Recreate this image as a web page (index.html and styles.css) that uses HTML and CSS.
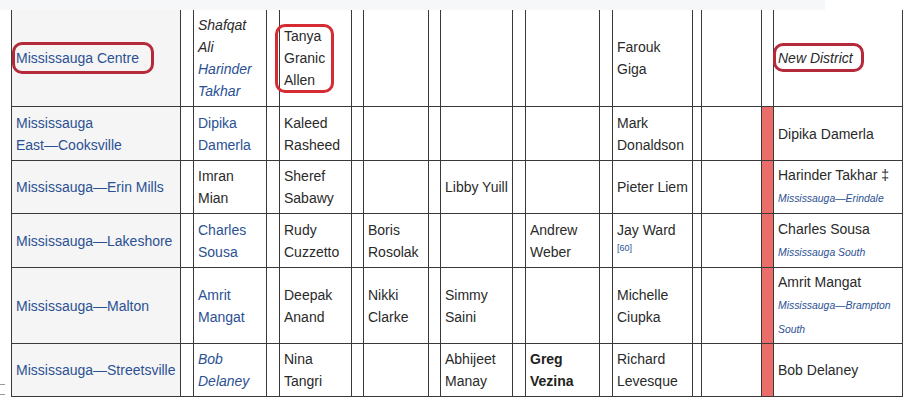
FILE: index.html
```html
<!DOCTYPE html>
<html lang="en">
<head>
<meta charset="utf-8">
<title>Mississauga ridings</title>
<link rel="stylesheet" href="styles.css">
</head>
<body>
<div class="band"></div>
<div class="wrap">
  <table class="results">
    <colgroup>
      <col class="w-dist"><col class="w-13"><col class="w-lib"><col class="w-13">
      <col class="w-pc"><col class="w-12"><col class="w-ndp"><col class="w-12">
      <col class="w-grn"><col class="w-13"><col class="w-oth"><col class="w-13">
      <col class="w-ind"><col class="w-9"><col class="w-blank"><col class="w-12">
      <col class="w-inc">
    </colgroup>
    <tbody>
      <tr class="r1">
        <th class="dist"><a href="#">Mississauga Centre</a></th>
        <td></td>
        <td><i>Shafqat Ali</i><br><i><a href="#">Harinder Takhar</a></i></td>
        <td></td>
        <td>Tanya Granic Allen</td>
        <td></td><td></td><td></td><td></td><td></td><td></td><td></td>
        <td>Farouk Giga</td>
        <td></td><td></td><td></td>
        <td><i>New District</i></td>
      </tr>
      <tr class="r2">
        <th class="dist"><a href="#">Mississauga<br>East—Cooksville</a></th>
        <td></td>
        <td><a href="#">Dipika Damerla</a></td>
        <td></td>
        <td>Kaleed Rasheed</td>
        <td></td><td></td><td></td><td></td><td></td><td></td><td></td>
        <td>Mark Donaldson</td>
        <td></td><td></td><td class="lib"></td>
        <td>Dipika Damerla</td>
      </tr>
      <tr class="r3">
        <th class="dist"><a href="#">Mississauga—Erin Mills</a></th>
        <td></td>
        <td>Imran Mian</td>
        <td></td>
        <td>Sheref Sabawy</td>
        <td></td><td></td><td></td>
        <td class="nowrap">Libby Yuill</td>
        <td></td><td></td><td></td>
        <td>Pieter Liem</td>
        <td></td><td></td><td class="lib"></td>
        <td><span class="nowrap">Harinder Takhar ‡</span><br><a class="small" href="#">Mississauga—Erindale</a></td>
      </tr>
      <tr class="r4">
        <th class="dist"><a href="#">Mississauga—Lakeshore</a></th>
        <td></td>
        <td><a href="#">Charles Sousa</a></td>
        <td></td>
        <td>Rudy Cuzzetto</td>
        <td></td>
        <td>Boris Rosolak</td>
        <td></td><td></td><td></td>
        <td>Andrew Weber</td>
        <td></td>
        <td>Jay Ward <sup class="ref"><a href="#">[60]</a></sup></td>
        <td></td><td></td><td class="lib"></td>
        <td>Charles Sousa<br><a class="small" href="#">Mississauga South</a></td>
      </tr>
      <tr class="r5">
        <th class="dist"><a href="#">Mississauga—Malton</a></th>
        <td></td>
        <td><a href="#">Amrit Mangat</a></td>
        <td></td>
        <td>Deepak Anand</td>
        <td></td>
        <td>Nikki Clarke</td>
        <td></td>
        <td>Simmy Saini</td>
        <td></td><td></td><td></td>
        <td>Michelle Ciupka</td>
        <td></td><td></td><td class="lib"></td>
        <td>Amrit Mangat<br><a class="small" href="#">Mississauga—Brampton South</a></td>
      </tr>
      <tr class="r6">
        <th class="dist"><a href="#">Mississauga—Streetsville</a></th>
        <td></td>
        <td><i><a href="#">Bob Delaney</a></i></td>
        <td></td>
        <td>Nina Tangri</td>
        <td></td><td></td><td></td>
        <td>Abhijeet Manay</td>
        <td></td>
        <td><b>Greg Vezina</b></td>
        <td></td>
        <td>Richard Levesque</td>
        <td></td><td></td><td class="lib"></td>
        <td>Bob Delaney</td>
      </tr>
    </tbody>
  </table>
  <div class="note note-dist"></div>
  <div class="note note-tanya"></div>
  <div class="note note-new"></div>
  <div class="tick tick-a"></div>
  <div class="tick tick-b"></div>
</div>
</body>
</html>
```
FILE: styles.css
```css
html, body {
  margin: 0;
  padding: 0;
  background: #ffffff;
}

body {
  font-family: "Liberation Sans", Arial, sans-serif;
  font-size: 14px;
  color: #2a2a2a;
}

.band {
  width: 825px;
  height: 10px;
  background: #f6f7f8;
}

.wrap {
  position: relative;
  padding-left: 11px;
}

.results {
  table-layout: fixed;
  width: 892px;
  border-collapse: separate;
  border-spacing: 0;
  border-left: 1px solid #3a3a3a;
}

.results th,
.results td {
  border-right: 1px solid #3a3a3a;
  border-bottom: 1px solid #3a3a3a;
  padding: 0 3px 0 4px;
  line-height: 22px;
  text-align: left;
  vertical-align: middle;
  font-weight: normal;
  background: #ffffff;
  overflow: visible;
}

.results th.dist {
  background: #f5f5f5;
  padding-left: 4px;
}

.results td.lib {
  background: #ea6d6a;
}

.w-dist { width: 169px; }
.w-13 { width: 13px; }
.w-12 { width: 12px; }
.w-9 { width: 9px; }
.w-lib { width: 73px; }
.w-pc { width: 72px; }
.w-ndp { width: 65px; }
.w-grn { width: 72px; }
.w-oth { width: 74px; }
.w-ind { width: 80px; }
.w-blank { width: 60px; }
.w-inc { width: 129px; }

.r1 { height: 97px; }
.r2 { height: 54px; }
.r3 { height: 53px; }
.r4 { height: 54px; }
.r5 { height: 76px; }
.r6 { height: 53px; }

a {
  color: #2b5193;
  text-decoration: none;
}

b {
  font-weight: bold;
  color: #222222;
}

.nowrap {
  white-space: nowrap;
}

.small {
  font-size: 10.4px;
  font-style: italic;
}

.ref {
  font-size: 9px;
  line-height: 1;
}

.note {
  position: absolute;
  box-sizing: border-box;
  border: 3px solid #b52a3b;
  border-radius: 10px;
  pointer-events: none;
}

.note-dist {
  left: 12px;
  top: 32px;
  width: 142px;
  height: 32px;
}

.note-tanya {
  left: 275px;
  top: 14px;
  width: 59px;
  height: 69px;
  border-color: #d52b33;
}

.note-new {
  left: 773px;
  top: 33px;
  width: 91px;
  height: 29px;
}

.tick {
  position: absolute;
  left: 0;
  width: 5px;
  height: 1px;
  background: #9a9a9a;
}

.tick-a { top: 374px; }
.tick-b { top: 384px; }
```
